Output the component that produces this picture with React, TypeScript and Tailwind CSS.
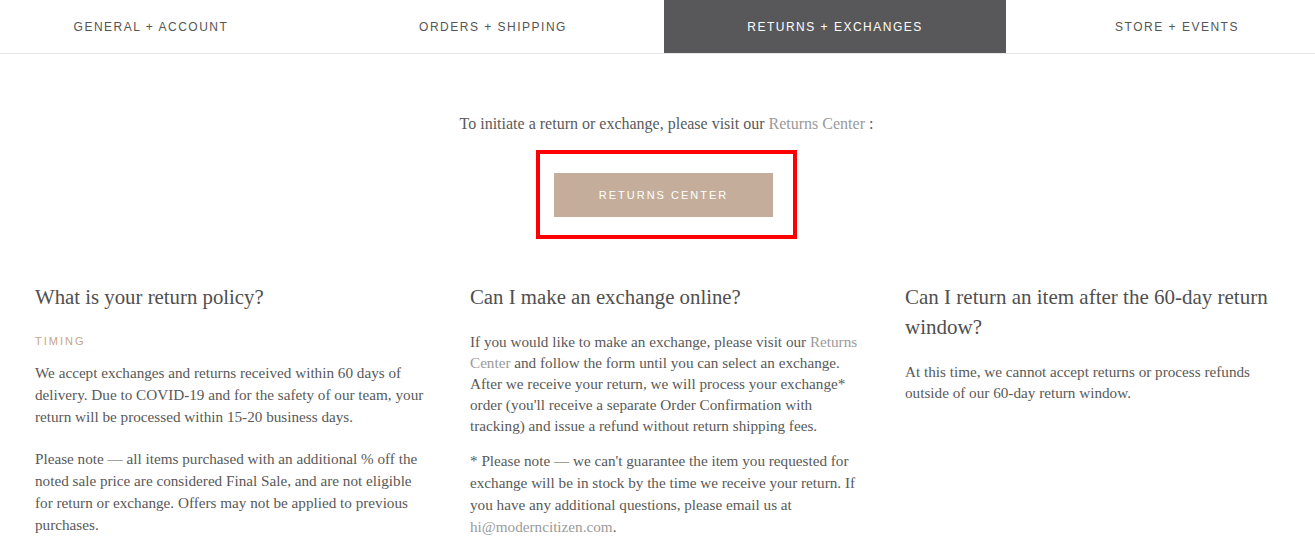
import React from 'react'

const TABS = [
  { label: 'GENERAL + ACCOUNT', active: false },
  { label: 'ORDERS + SHIPPING', active: false },
  { label: 'RETURNS + EXCHANGES', active: true },
  { label: 'STORE + EVENTS', active: false },
]

const serif = "font-['Liberation_Serif',serif]"

export default function App() {
  return (
    <div className="min-h-[550px] bg-white text-[#595959]">
      {/* Tabs */}
      <nav className="h-[54px] overflow-hidden border-b border-[#e6e6e6] bg-white">
        <div className="-ml-[20px] flex">
          {TABS.map((tab) => (
            <div
              key={tab.label}
              className={
                tab.active
                  ? "flex h-[53px] w-[342px] shrink-0 items-center justify-center bg-[#58585a] font-['Liberation_Sans',sans-serif] text-[12px] tracking-[1.5px] text-white"
                  : "flex h-[53px] w-[342px] shrink-0 items-center justify-center font-['Liberation_Sans',sans-serif] text-[12px] tracking-[1.5px] text-[#555]"
              }
            >
              {tab.label}
            </div>
          ))}
        </div>
      </nav>

      {/* Intro */}
      <div className="flex flex-col items-center pt-[59px] pl-[18px]">
        <p className={`${serif} text-[16px] leading-[22px] text-[#5a5a5a]`}>
          To initiate a return or exchange, please visit our{' '}
          <a className="text-[#9a9a9a]">Returns Center</a> :
        </p>
        <div className="mt-[15px] border-4 border-[#ff0000] pt-[19px] pb-[18px] pl-[14px] pr-[20px]">
          <button className="flex h-[44px] w-[219px] items-center justify-center bg-[#c4ae9b] font-['Liberation_Sans',sans-serif] text-[11px] tracking-[2px] text-white">
            RETURNS CENTER
          </button>
        </div>
      </div>

      {/* Columns */}
      <div className={`${serif} mt-[43px] grid grid-cols-[390px_390px_390px] gap-x-[45px] px-[35px]`}>
        <section>
          <h2 className="text-[20.8px] leading-[30px] text-[#4f4f4f]">What is your return policy?</h2>
          <p className="mt-[21px] font-['Liberation_Sans',sans-serif] text-[11px] leading-[16px] tracking-[2px] text-[#c5a58a]">
            TIMING
          </p>
          <p className="mt-[13px] text-[15.2px] leading-[22px]">
            We accept exchanges and returns received within 60 days of delivery. Due to COVID-19 and for the
            safety of our team, your return will be processed within 15-20 business days.
          </p>
          <p className="mt-[20px] text-[15.2px] leading-[22px]">
            Please note — all items purchased with an additional % off the noted sale price are considered
            Final Sale, and are not eligible for return or exchange. Offers may not be applied to previous
            purchases.
          </p>
        </section>

        <section>
          <h2 className="text-[20.8px] leading-[30px] text-[#4f4f4f]">Can I make an exchange online?</h2>
          <p className="mt-[19px] text-[15.2px] leading-[21px]">
            If you would like to make an exchange, please visit our{' '}
            <a className="text-[#9a9a9a]">Returns Center</a> and follow the form until you can select an
            exchange. After we receive your return, we will process your exchange*
            <br />
            order (you'll receive a separate Order Confirmation with tracking) and issue a refund without
            return shipping fees.
          </p>
          <p className="mt-[14px] text-[15.2px] leading-[22px]">
            * Please note — we can't guarantee the item you requested for exchange will be in stock by the
            time we receive your return. If you have any additional questions, please email us at{' '}
            <a className="text-[#9a9a9a]">hi@moderncitizen.com</a>.
          </p>
        </section>

        <section>
          <h2 className="text-[21px] leading-[30px] text-[#4f4f4f]">
            Can I return an item after the 60-day return window?
          </h2>
          <p className="mt-[19px] text-[15.2px] leading-[21px]">
            At this time, we cannot accept returns or process refunds outside of our 60-day return window.
          </p>
        </section>
      </div>
    </div>
  )
}
